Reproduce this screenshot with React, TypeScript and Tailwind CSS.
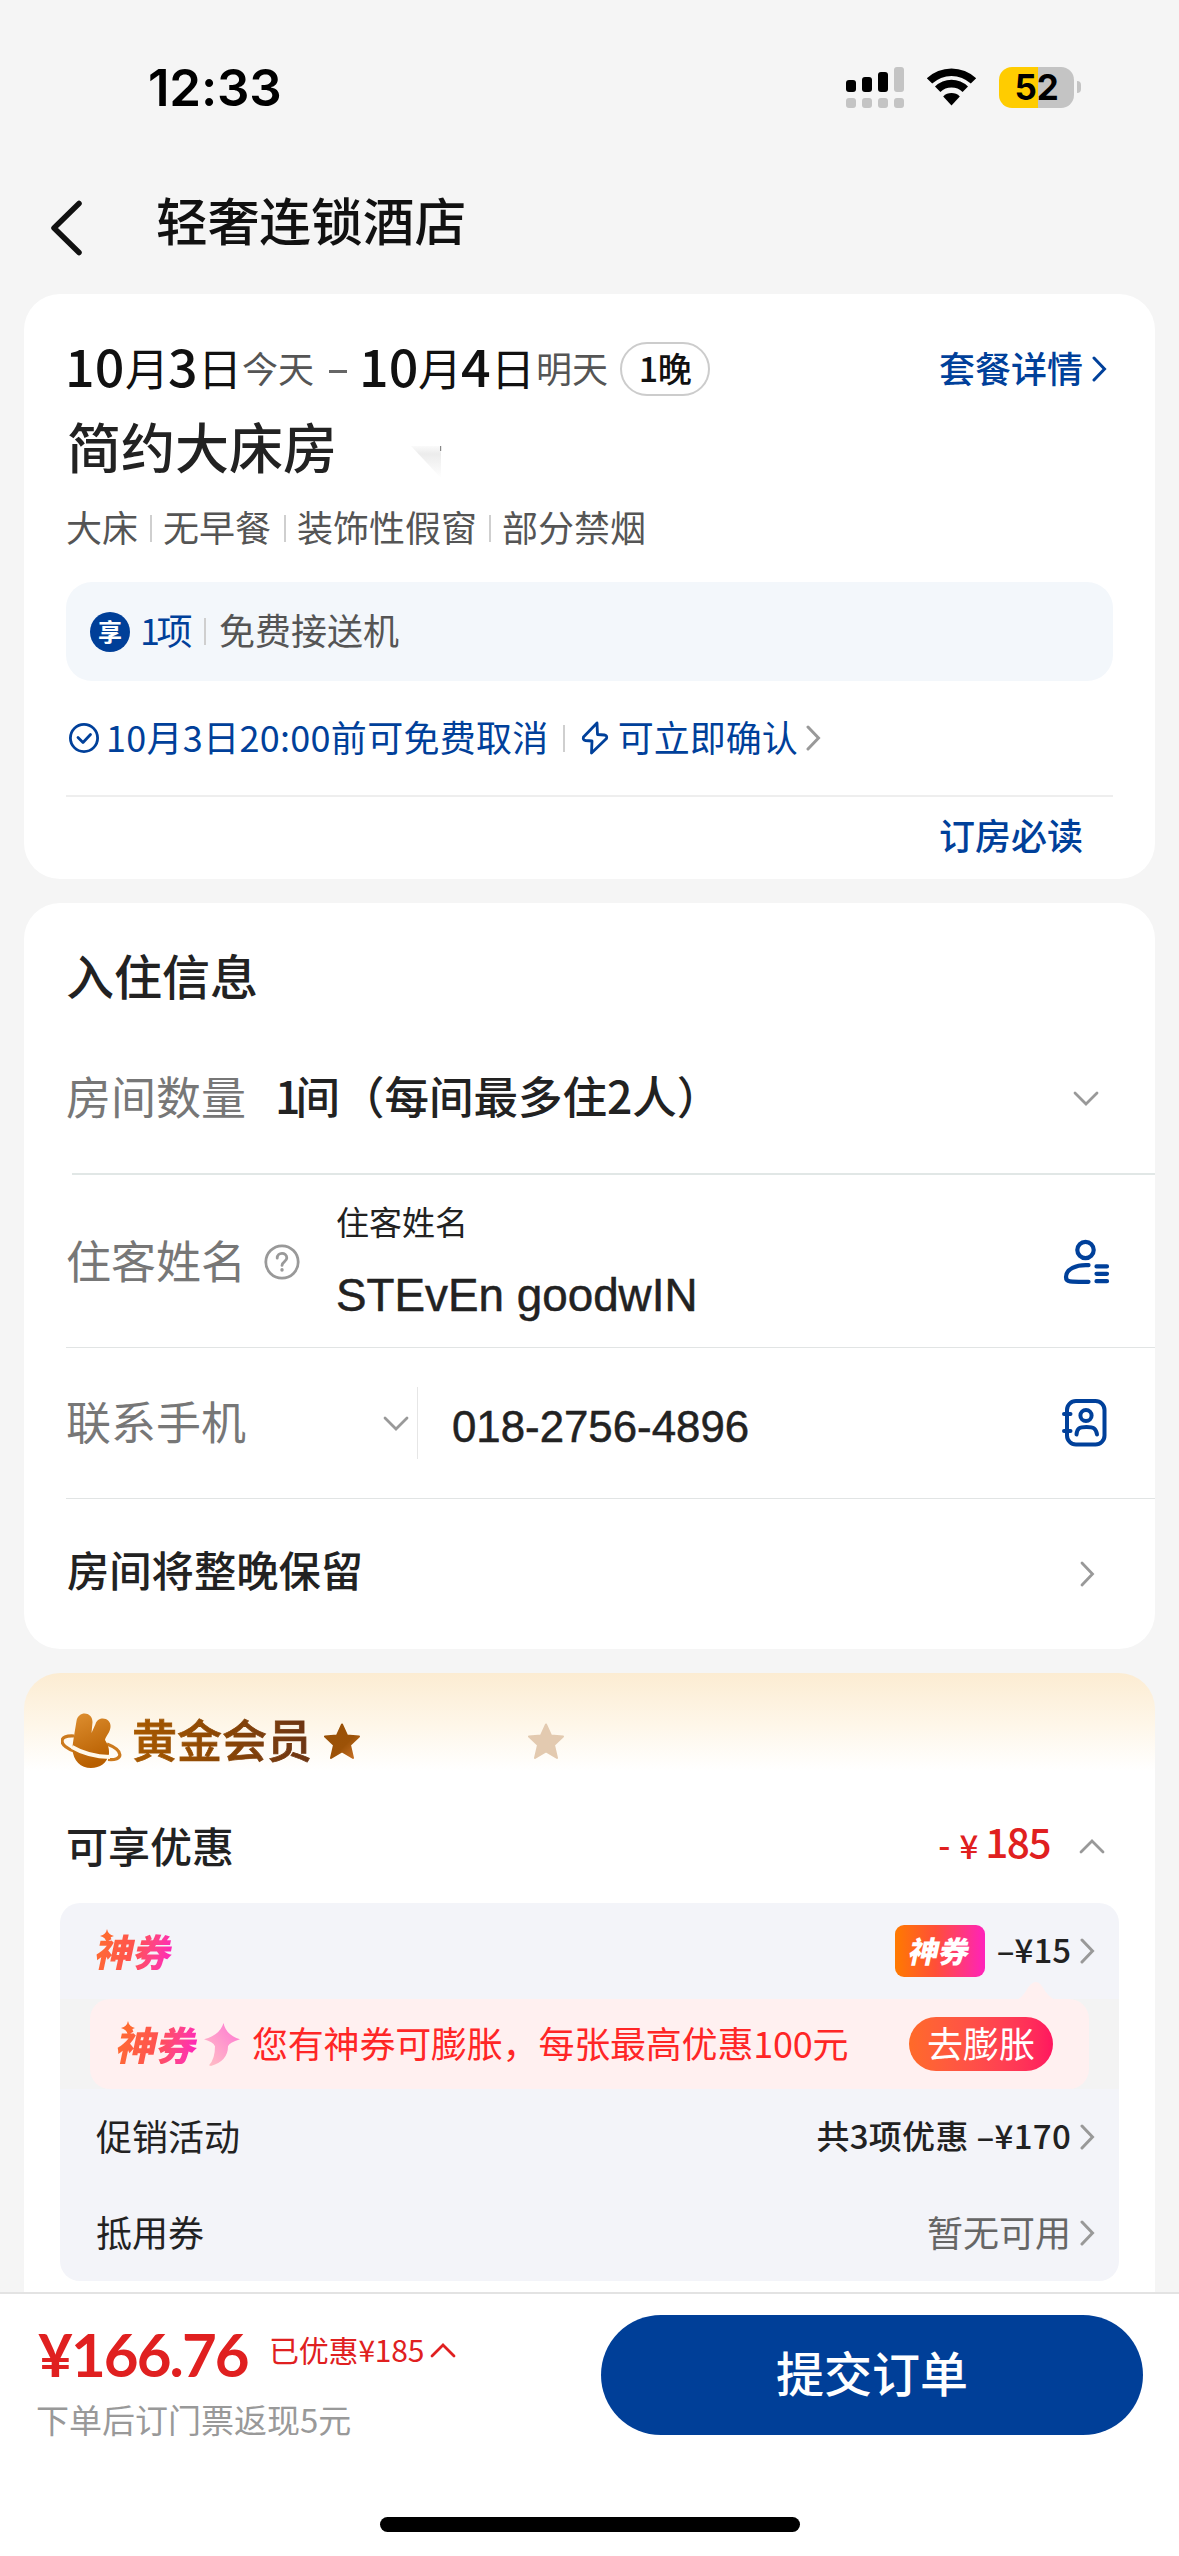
import React from "react";

type ChevronProps = { dir: "left" | "right" | "up" | "down"; className?: string; stroke?: number };

function Chevron({ dir, className = "", stroke = 3 }: ChevronProps) {
  const vertical = dir === "up" || dir === "down";
  const d = {
    left: "M12 2 L2 13 L12 24",
    right: "M2 2 L12.5 13 L2 24",
    up: "M2 13 L13 2 L24 13",
    down: "M2 2 L13 13 L24 2",
  }[dir];
  return (
    <svg
      className={"shrink-0 " + className}
      width={vertical ? 26 : 15}
      height={vertical ? 15 : 26}
      viewBox={vertical ? "0 0 26 15" : "0 0 15 26"}
      fill="none"
      stroke="currentColor"
      strokeWidth={stroke}
      strokeLinecap="round"
    >
      <path d={d} />
    </svg>
  );
}

function Sep({ className = "" }: { className?: string }) {
  return <span className={"h-[27px] w-[2px] shrink-0 bg-[#cfcfcf] " + className} />;
}

function Star({ className = "", fill }: { className?: string; fill: string }) {
  return (
    <svg className={"shrink-0 " + className} width="36" height="36" viewBox="0 0 36 36">
      <defs>
        <linearGradient id="starGold" x1="0" y1="0" x2="1" y2="1">
          <stop offset="0" stopColor="#985005" />
          <stop offset="0.6" stopColor="#9c5207" />
          <stop offset="1" stopColor="#d0762a" />
        </linearGradient>
      </defs>
      <path
        fill={fill}
        stroke={fill}
        strokeWidth="2"
        strokeLinejoin="round"
        d="M18 1.5 L23 12.5 L35 13.5 L26 22 L29 35 L18 28.5 L7 35 L10 22 L1 13.5 L13 12.5 Z"
      />
    </svg>
  );
}

function StatusBar() {
  return (
    <div className="flex h-[174px] shrink-0 items-center">
      <span className="mt-px ml-[148px] w-[698px] font-['Inter'] text-[51px] font-semibold tracking-[-0.2px]">12:33</span>
      <svg width="58" height="41" viewBox="0 0 58 41" className="shrink-0">
        <g fill="#000">
          <rect x="0" y="13" width="10" height="12" rx="3" />
          <rect x="16" y="10" width="10" height="15" rx="3" />
          <rect x="32" y="5" width="10" height="20" rx="3" />
        </g>
        <g fill="#c4c4c4">
          <rect x="48" y="0" width="10" height="25" rx="3" />
          <rect x="0" y="31" width="10" height="10" rx="3" />
          <rect x="16" y="31" width="10" height="10" rx="3" />
          <rect x="32" y="31" width="10" height="10" rx="3" />
          <rect x="48" y="31" width="10" height="10" rx="3" />
        </g>
      </svg>
      <svg width="51" height="38" viewBox="0 0 51 38" className="ml-[22px] shrink-0">
        <path d="M0.8 10.2 A36 36 0 0 1 50.2 10.2 L44.8 15.6 A28 28 0 0 0 6.2 15.6 Z" />
        <path d="M9 18.6 A23.5 23.5 0 0 1 42 18.6 L36.6 24 A16 16 0 0 0 14.4 24 Z" />
        <path d="M17.2 28.4 A12 12 0 0 1 33.8 28.4 L25.5 37.4 Z" />
      </svg>
      <div className="ml-[22px] flex h-[41px] w-[75px] shrink-0 items-center justify-center rounded-[13px] bg-[linear-gradient(to_right,#ffcc00_39px,#c4c4c4_39px)]">
        <span className="font-['Inter'] text-[35px] font-bold tracking-[-0.2px]">52</span>
      </div>
      <span className="ml-[3px] h-[12px] w-[4px] rounded-r-full bg-[#c4c4c4]" />
    </div>
  );
}

function Header() {
  return (
    <div className="flex h-[120px] shrink-0 items-center pb-[12px] text-[#111]">
      <svg width="34" height="56" viewBox="0 0 34 56" fill="none" className="ml-[49px] shrink-0">
        <path d="M30 3.5 L5 28 L30 52.5" stroke="#111" strokeWidth="5.5" strokeLinecap="round" strokeLinejoin="round" />
      </svg>
      <span className="-mt-[18px] ml-[73px] text-[51.7px] font-medium">轻奢连锁酒店</span>
    </div>
  );
}

function StayCard() {
  return (
    <section className="mx-[24px] h-[585px] shrink-0 rounded-[36px] bg-white px-[42px] pt-[48px]">
      <div className="flex h-[54px] items-center">
        <div className="-mt-1 flex items-center text-[#111]">
          <span className="-mt-1 w-[59px] text-[52px] font-medium -indent-[1px]">10</span>
          <span className="w-[43px] text-[44px]">月</span>
          <span className="-mt-1 w-[30px] text-[52px] font-medium">3</span>
          <span className="w-[44px] text-[44px]">日</span>
          <span className="w-[87px] text-[36px] text-[#555]">今天</span>
          <span className="mt-[8px] h-[3px] w-[18px] bg-[#666]" />
          <span className="-mt-1 ml-[12px] w-[59px] text-[52px] font-medium">10</span>
          <span className="w-[43px] text-[44px]">月</span>
          <span className="-mt-1 w-[30px] text-[52px] font-medium">4</span>
          <span className="w-[45px] text-[44px]">日</span>
          <span className="text-[36px] text-[#555]">明天</span>
        </div>
        <span className="ml-[12px] flex h-[54px] w-[90px] items-center justify-center rounded-full border-2 border-[#ccc] pb-[3px] text-[34px] font-medium tracking-[-0.5px] text-[#111]">
          1晚
        </span>
        <span className="-mt-1 ml-auto text-[36px] font-medium text-[#00409a]">套餐详情</span>
        <Chevron dir="right" className="mr-[6px] ml-[9px] text-[#00409a]" />
      </div>
      <div className="flex h-[98px] items-center">
        <span className="mt-[2px] ml-px w-[344px] text-[54px] font-medium text-[#222]">简约大床房</span>
        <svg width="32" height="36" viewBox="0 0 32 36" className="mt-[34px]">
          <defs>
            <linearGradient id="foldShade" x1="0" y1="0" x2="0" y2="1">
              <stop offset="0" stopColor="#fafafa" />
              <stop offset="0.25" stopColor="#ececec" />
              <stop offset="1" stopColor="#fff" />
            </linearGradient>
          </defs>
          <path d="M0 2 L30 2 L30 34 Z" fill="url(#foldShade)" />
          <rect x="29" y="2" width="1.2" height="5" fill="#888" />
        </svg>
      </div>
      <div className="flex h-[64px] items-center text-[36px] text-[#555]">
        <span>大床</span>
        <Sep className="mt-1 ml-[12px] mr-[11px]" />
        <span>无早餐</span>
        <Sep className="mt-1 ml-[13px] mr-[11px]" />
        <span>装饰性假窗</span>
        <Sep className="mt-1 ml-[12px] mr-[11px]" />
        <span>部分禁烟</span>
      </div>
      <div className="mt-[24px] flex h-[99px] items-center rounded-[26px] bg-[#f3f7fb] pl-[24px] text-[36px]">
        <span className="flex h-[40px] w-[40px] items-center justify-center rounded-full bg-[#003f98] pb-[2px] text-[24px] font-bold text-white">
          享
        </span>
        <span className="-mt-[6px] ml-[10px] w-[52px] text-[#00409a] tracking-[-3.5px]">1项</span>
        <Sep className="ml-[12px] mr-[13px]" />
        <span className="-mt-[6px] text-[#555]">免费接送机</span>
      </div>
      <div className="flex h-[114px] items-center text-[36px] text-[#00409a]">
        <svg width="32" height="32" viewBox="0 0 32 32" fill="none" stroke="#00409a" className="ml-[2px]" strokeWidth="2.8" strokeLinecap="round" strokeLinejoin="round">
          <circle cx="16" cy="16" r="13.6" />
          <path d="M10 15.5 L15 20.5 L22.5 12.5" />
        </svg>
        <span className="-mt-[4px] ml-[6px] tracking-[0.3px]">10月3日20:00前可免费取消</span>
        <Sep className="ml-[14px] mr-[16px]" />
        <svg width="28" height="34" viewBox="0 0 28 34" fill="none" stroke="#00409a" strokeWidth="2.8" strokeLinejoin="round" strokeLinecap="round">
          <path d="M16 2 L2.5 16 Q1.5 19 4.5 19.5 L11 20 L10.5 32 L25.5 17.5 Q26.5 14.5 23.5 14 L16.5 13.5 Z" />
        </svg>
        <span className="-mt-[4px] ml-[9px]">可立即确认</span>
        <Chevron dir="right" className="ml-[8px] text-[#999]" />
      </div>
      <div className="h-[2px] bg-[#eee]" />
      <div className="flex h-[82px] items-center justify-end pr-[30px] pb-[8px] text-[36px] font-medium text-[#00409a]">
        <span>订房必读</span>
      </div>
    </section>
  );
}

function GuestCard() {
  return (
    <section className="mx-[24px] mt-[24px] h-[746px] shrink-0 rounded-[36px] bg-white pl-[42px] text-[#222]">
      <div className="flex h-[115px] items-center pt-[27px] text-[48px] font-medium">入住信息</div>
      <div className="flex h-[155px] items-center text-[45px]">
        <span className="w-[209px] text-[#777]">房间数量</span>
        <span className="text-[44.5px] font-medium">
          <span className="tracking-[-5px]">1</span>间（每间最多住2人）
        </span>
        <Chevron dir="down" className="mt-[6px] mr-[56px] ml-auto text-[#999]" stroke={2.8} />
      </div>
      <div className="ml-[6px] h-[2px] bg-[#e1e7e6]" />
      <div className="flex h-[172px] items-center">
        <span className="-mt-[3px] text-[45px] text-[#777]">住客姓名</span>
        <svg width="38" height="38" viewBox="0 0 38 38" fill="none" stroke="#999" strokeWidth="2.8" strokeLinecap="round" strokeLinejoin="round" className="mt-[2px] ml-[17px]">
          <circle cx="19" cy="19" r="16.2" />
          <path d="M14.2 15.2 C14.2 8.8 23.8 8.8 23.8 15 C23.8 18.5 19 18.6 19 22.4" />
          <path d="M19 26.8 V27" strokeWidth="3.4" />
        </svg>
        <div className="ml-[35px] flex flex-col">
          <span className="mt-px text-[33px]">住客姓名</span>
          <span className="mt-[35px] font-['Liberation_Sans'] text-[45.8px] [-webkit-text-stroke:0.5px]">STEvEn goodwIN</span>
        </div>
        <svg width="48" height="48" viewBox="0 0 48 48" fill="none" stroke="#00409a" strokeWidth="4.2" strokeLinecap="round" className="mt-[2px] mr-[45px] ml-auto">
          <circle cx="23.5" cy="12" r="8.2" />
          <path d="M26.5 27.2 C14 26.5 4 31 4 39 Q4 43 8 43.4 Q14 44 26.5 43.8" strokeLinejoin="round" />
          <path d="M34.5 28.4 H45 M34.5 35.8 H45 M34.5 43.2 H45" />
        </svg>
      </div>
      <div className="h-px bg-[#e1e4e4]" />
      <div className="flex h-[150px] items-center">
        <span className="-mt-[6px] w-[317px] text-[45px] text-[#777]">联系手机</span>
        <Chevron dir="down" className="text-[#999]" stroke={2.8} />
        <span className="ml-[8px] h-[72px] w-px bg-[#e6e6e6]" />
        <span className="mt-[8px] ml-[34px] font-['Liberation_Sans'] text-[43.8px] [-webkit-text-stroke:0.5px]">018-2756-4896</span>
        <svg width="48" height="50" viewBox="0 0 48 50" fill="none" stroke="#00409a" strokeWidth="4" strokeLinecap="round" className="mr-[46px] ml-auto">
          <rect x="6" y="3" width="37.5" height="43.5" rx="9" />
          <circle cx="25" cy="17.5" r="5.6" />
          <path d="M15.5 36.5 C16 30 18.5 29 25.5 29 C32.5 29 35 30 36 36.5" strokeLinejoin="round" />
          <path d="M3 16 H9.5 M3 33 H9.5" />
        </svg>
      </div>
      <div className="h-px bg-[#e1e4e4]" />
      <div className="flex h-[150px] items-center">
        <span className="-mt-[9px] ml-px text-[42.3px] font-medium">房间将整晚保留</span>
        <Chevron dir="right" className="mr-[60px] ml-auto text-[#999]" stroke={2.8} />
      </div>
    </section>
  );
}

function MemberLogo() {
  return (
    <svg width="62" height="64" viewBox="0 0 62 64" className="shrink-0">
      <defs>
        <linearGradient id="rabbitGold" x1="0" y1="0" x2="0.3" y2="1">
          <stop offset="0" stopColor="#de8f30" />
          <stop offset="1" stopColor="#b85f00" />
        </linearGradient>
      </defs>
      <path d="M13 27 C-3 26 -3 36 13 42 M46 35 C64 42 62 52 47 50.5" fill="none" stroke="#cc7a1e" strokeWidth="3.2" />
      <path
        fill="url(#rabbitGold)"
        d="M15.5 12 C17 1.5 31.5 2 31.5 13 L30.5 24 L34.5 15 C37.5 6 50.5 9 49.5 18 C49 24 44.5 27 44 31 C46.5 35 48.5 39 48 45 C46 54 39 59 30 59 C20 59 12 52 11.5 40 C11.5 35 12.5 31 13 27 Z"
      />
      <path d="M11 38 Q27 47.5 49 48" fill="none" stroke="#fff8ea" strokeWidth="4" />
    </svg>
  );
}

function TicketLogo({ white = false, className = "" }: { white?: boolean; className?: string }) {
  return (
    <span className={"relative inline-block shrink-0 " + className}>
      <span
        className={
          "inline-block -skew-x-12 font-black " +
          (white ? "text-white" : "bg-gradient-to-r from-[#ff6a32] via-[#ff5050] to-[#ff22bb] bg-clip-text text-transparent")
        }
      >
        神券
      </span>
      {!white && (
        <svg width="14" height="14" viewBox="0 0 14 14" className="absolute top-[-3px] left-[3px]">
          <path d="M7 0 Q8 5.5 14 7 Q8 8.5 7 14 Q6 8.5 0 7 Q6 5.5 7 0 Z" fill="#ff6a32" />
        </svg>
      )}
    </span>
  );
}

function MemberCard() {
  return (
    <section className="mx-[24px] mt-[24px] h-[619px] shrink-0 rounded-t-[36px] bg-[linear-gradient(to_bottom,#fcecd2_0px,#fef6e8_50px,#fff_98px)] px-[36px] text-[#222]">
      <div className="flex h-[136px] items-center">
        <div className="ml-px">
          <MemberLogo />
        </div>
        <span className="-mt-[5px] ml-[9px] bg-gradient-to-r from-[#a85a00] via-[#8a4604] to-[#6b3413] bg-clip-text py-1 text-[45px] font-medium text-transparent [-webkit-text-stroke:0.8px_transparent]">
          黄金会员
        </span>
        <Star className="ml-[12px]" fill="url(#starGold)" />
        <Star className="ml-[168px]" fill="#e3cab0" />
      </div>
      <div className="flex h-[94px] items-center pb-[18px]">
        <span className="-mt-[5px] ml-[6px] text-[42px] font-medium">可享优惠</span>
        <span className="ml-auto flex items-center text-[#e02020]">
          <span className="-mt-[6px] text-[34px] font-medium">-</span>
          <span className="-mt-[4px] ml-[9px] text-[33px] font-medium">¥</span>
          <span className="-mt-[11px] ml-[7px] text-[40.5px] font-medium tracking-[-1.5px]">185</span>
        </span>
        <Chevron dir="up" className="-mt-[2px] mr-[14px] ml-[29px] text-[#999]" stroke={2.8} />
      </div>
      <div className="h-[378px] overflow-hidden rounded-[20px] bg-[#f3f4f9]">
        <div className="flex h-[96px] items-center">
          <TicketLogo className="ml-[37px] text-[38px]" />
          <span className="ml-auto flex h-[52px] w-[90px] items-center justify-center rounded-[9px] bg-[linear-gradient(to_right,#ff7a00,#ff4f38_45%,#ff22bb)]">
            <TicketLogo white className="-mt-[3px] text-[30px]" />
          </span>
          <span className="-mt-[4px] ml-[12px] text-[33px] font-medium">–¥15</span>
          <Chevron dir="right" className="mr-[24px] ml-[9px] text-[#999]" />
        </div>
        <div className="h-[90px] bg-[#f3f3f3] pr-[30px] pl-[30px]">
          <div className="relative flex h-[90px] items-center rounded-[20px] bg-[#fff0f0]">
            <svg width="44" height="20" viewBox="0 0 44 20" className="absolute -top-[18px] right-[31px]">
              <path d="M0 20 Q7 18 12 10 Q22 -8 31 10 Q37 18 44 20 Z" fill="#fff0f0" />
            </svg>
            <TicketLogo className="ml-[28px] text-[40px]" />
            <svg width="36" height="43" viewBox="0 0 36 50" preserveAspectRatio="none" className="ml-[6px] shrink-0">
              <defs>
                <linearGradient id="sparkPink" x1="1" y1="0" x2="0" y2="1">
                  <stop offset="0" stopColor="#ff74d4" />
                  <stop offset="1" stopColor="#ffc4c4" />
                </linearGradient>
              </defs>
              <path
                fill="url(#sparkPink)"
                d="M19.5 0 Q22 14 36 19 Q25 23 24 27 Q24 44 7 50 L5 49 Q11 42 11 27 Q9 22 0 19 Q16 14 19.5 0 Z"
              />
            </svg>
            <span className="-mt-[4px] ml-[12px] text-[36px] tracking-[-0.2px] text-[#ff2626]">您有神券可膨胀，每张最高优惠100元</span>
            <span className="absolute right-[36px] flex h-[54px] w-[144px] items-center justify-center rounded-full bg-gradient-to-r from-[#ff6a28] to-[#ff155f] pb-1 text-[36px] text-white">
              去膨胀
            </span>
          </div>
        </div>
        <div className="flex h-[96px] items-center">
          <span className="-mt-[4px] ml-[36px] text-[36px]">促销活动</span>
          <span className="-mt-[4px] ml-auto text-[33px] font-medium tracking-[0.3px]">共3项优惠 –¥170</span>
          <Chevron dir="right" className="mr-[24px] ml-[9px] text-[#999]" />
        </div>
        <div className="flex h-[96px] items-center">
          <span className="-mt-[4px] ml-[36px] text-[36px]">抵用券</span>
          <span className="-mt-[4px] ml-auto text-[36px] text-[#666]">暂无可用</span>
          <Chevron dir="right" className="mr-[24px] ml-[9px] text-[#999]" />
        </div>
      </div>
    </section>
  );
}

function BottomBar() {
  return (
    <footer className="flex h-[264px] shrink-0 flex-col items-center border-t-2 border-[#e3e3e3] bg-white">
      <div className="flex w-full pt-[21px] pr-[36px] pl-[36px]">
        <div className="flex-1">
          <div className="flex h-[78px] items-center text-[#e02020]">
            <span className="ml-[2px] w-[231px] font-['Lato'] text-[60px] font-bold tracking-[-1.9px]">¥166.76</span>
            <span className="-mt-[10px] text-[30px] tracking-[-0.2px]">已优惠¥185</span>
            <Chevron dir="up" className="-mt-[8px] ml-[6px]" stroke={2.8} />
          </div>
          <div className="flex h-[52px] items-center text-[33px] text-[#999]">下单后订门票返现5元</div>
        </div>
        <button className="flex h-[120px] w-[542px] items-center justify-center rounded-[60px] bg-[#003f98] pb-[8px] text-[48px] leading-none font-medium text-white">
          提交订单
        </button>
      </div>
      <div className="mt-[72px] h-[15px] w-[420px] rounded-full bg-black" />
    </footer>
  );
}

export default function App() {
  return (
    <div className="flex h-[2556px] w-[1179px] flex-col overflow-hidden bg-[#f5f5f5] font-['Noto_Sans_CJK_SC',sans-serif] leading-none whitespace-nowrap text-black">
      <StatusBar />
      <Header />
      <StayCard />
      <GuestCard />
      <MemberCard />
      <BottomBar />
    </div>
  );
}
